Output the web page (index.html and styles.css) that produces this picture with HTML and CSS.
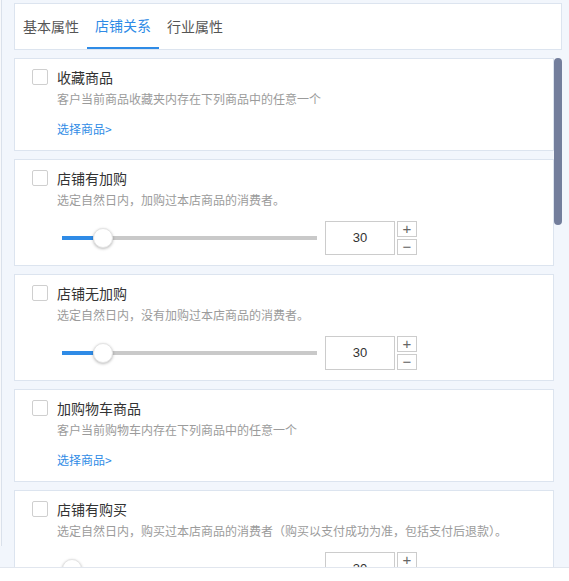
FILE: index.html
```html
<!DOCTYPE html>
<html lang="zh-CN">
<head>
<meta charset="utf-8">
<title>店铺关系</title>
<link rel="stylesheet" href="styles.css">
</head>
<body>
<div class="page">
  <div class="gutter"><div class="gutter-line"></div></div>
  <div class="main">
    <div class="tabs">
      <div class="tab">基本属性</div>
      <div class="tab active">店铺关系</div>
      <div class="tab">行业属性</div>
    </div>
    <div class="body-row">
      <div class="list">
        <div class="card">
          <div class="head"><span class="check"></span><span class="title">收藏商品</span></div>
          <div class="desc">客户当前商品收藏夹内存在下列商品中的任意一个</div>
          <a class="link">选择商品&gt;</a>
        </div>
        <div class="card">
          <div class="head"><span class="check"></span><span class="title">店铺有加购</span></div>
          <div class="desc">选定自然日内，加购过本店商品的消费者。</div>
          <div class="slider-row">
            <div class="track"><div class="fill" style="width:31px"></div><div class="knob"></div></div>
            <div class="num">30</div>
            <div class="steps"><div class="step">+</div><div class="step">−</div></div>
          </div>
        </div>
        <div class="card">
          <div class="head"><span class="check"></span><span class="title">店铺无加购</span></div>
          <div class="desc">选定自然日内，没有加购过本店商品的消费者。</div>
          <div class="slider-row">
            <div class="track"><div class="fill" style="width:31px"></div><div class="knob"></div></div>
            <div class="num">30</div>
            <div class="steps"><div class="step">+</div><div class="step">−</div></div>
          </div>
        </div>
        <div class="card">
          <div class="head"><span class="check"></span><span class="title">加购物车商品</span></div>
          <div class="desc">客户当前购物车内存在下列商品中的任意一个</div>
          <a class="link">选择商品&gt;</a>
        </div>
        <div class="card">
          <div class="head"><span class="check"></span><span class="title">店铺有购买</span></div>
          <div class="desc">选定自然日内，购买过本店商品的消费者（购买以支付成功为准，包括支付后退款）。</div>
          <div class="slider-row">
            <div class="track"><div class="fill" style="width:0px"></div><div class="knob"></div></div>
            <div class="num">30</div>
            <div class="steps"><div class="step">+</div><div class="step">−</div></div>
          </div>
        </div>
      </div>
      <div class="scroll-track"><div class="thumb"></div></div>
    </div>
  </div>
</div>
</body>
</html>
```
FILE: styles.css
```css
* { box-sizing: border-box; }
html, body { margin: 0; padding: 0; background: #fff; }
body {
  font-family: "Noto Sans CJK SC", "Noto Sans", "Liberation Sans", sans-serif;
  color: #333;
}
.page {
  display: flex;
  height: 568px;
  background: #f2f6fc;
  border-bottom: 1px solid #e1e6ee;
}
.gutter { width: 14px; flex: none; }
.gutter-line {
  width: 2px;
  height: 546px;
  border-left: 1px solid #f8f9fb;
  background: #dae1eb;
}
.main {
  width: 548px;
  flex: none;
  display: flex;
  flex-direction: column;
  padding-top: 3px;
}
.tabs {
  display: flex;
  height: 47px;
  background: #fff;
  border: 1px solid #dce4ef;
  flex: none;
}
.tab {
  padding: 0 8px;
  height: 45px;
  line-height: 45px;
  font-size: 14px;
  color: #555;
  border-bottom: 2px solid transparent;
}
.tab.active {
  color: #2f8be6;
  border-bottom-color: #2f8be6;
  line-height: 43px;
}
.body-row {
  flex: 1;
  display: flex;
  margin-top: 8px;
  overflow: hidden;
  min-height: 0;
}
.list {
  width: 540px;
  flex: none;
  overflow: hidden;
}
.scroll-track { width: 8px; flex: none; }
.thumb {
  height: 167px;
  background: #737e9c;
  border-radius: 4px;
}
.card {
  background: #fff;
  border: 1px solid #dce4ef;
  margin-bottom: 8px;
  padding: 8px 16px 12px 17px;
}
.card:has(.slider-row) { padding-bottom: 10px; }
.head {
  display: flex;
  align-items: center;
  height: 20px;
}
.check {
  width: 16px;
  height: 16px;
  border: 1px solid #cfcfcf;
  border-radius: 2px;
  background: #fff;
  margin-right: 9px;
  flex: none;
}
.title {
  font-size: 14px;
  line-height: 20px;
  color: #333;
}
.desc {
  margin: 3px 0 0 25px;
  font-size: 12px;
  line-height: 18px;
  color: #9b9b9b;
  white-space: nowrap;
}
.link {
  display: block;
  margin: 12px 0 0 25px;
  font-size: 12px;
  line-height: 18px;
  color: #2f8be6;
  cursor: pointer;
}
.slider-row {
  display: flex;
  align-items: center;
  margin: 12px 0 0 30px;
  height: 34px;
}
.track {
  width: 255px;
  height: 4px;
  background: #c9c9c9;
  display: flex;
  align-items: center;
  margin-right: 8px;
}
.fill {
  height: 4px;
  background: #2f8be6;
  flex: none;
}
.knob {
  width: 20px;
  height: 20px;
  border-radius: 50%;
  background: #fff;
  border: 1px solid #e4e4e4;
  box-shadow: 0 1px 3px rgba(0,0,0,0.28);
  flex: none;
}
.num {
  width: 70px;
  height: 34px;
  border: 1px solid #cccccc;
  font-family: "Liberation Sans", sans-serif;
  font-size: 13px;
  line-height: 32px;
  text-align: center;
  color: #333;
}
.steps {
  display: flex;
  flex-direction: column;
  gap: 2px;
  margin-left: 2px;
}
.step {
  width: 20px;
  height: 16px;
  border: 1px solid #cccccc;
  font-family: "Liberation Sans", sans-serif;
  font-size: 15px;
  line-height: 13px;
  text-align: center;
  color: #666;
}
```
